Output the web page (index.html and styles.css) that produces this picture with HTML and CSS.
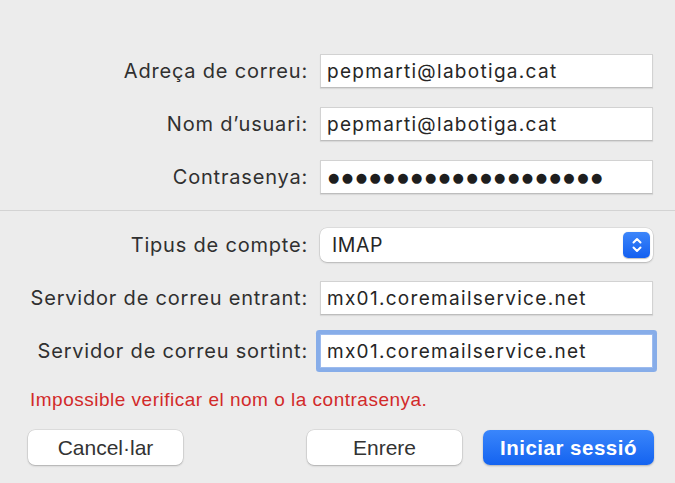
FILE: index.html
```html
<!DOCTYPE html>
<html lang="ca">
<head>
<meta charset="utf-8">
<title>Afegir compte</title>
<link rel="stylesheet" href="styles.css">
</head>
<body>
<main class="sheet">
  <section class="form form-top">
    <label class="lbl">Adreça de correu:</label>
    <div class="field">pepmarti@labotiga.cat</div>
    <label class="lbl">Nom d’usuari:</label>
    <div class="field">pepmarti@labotiga.cat</div>
    <label class="lbl">Contrasenya:</label>
    <div class="field field-pass"><span class="dots">●●●●●●●●●●●●●●●●●●●●</span></div>
  </section>
  <hr class="divider">
  <section class="form form-bottom">
    <label class="lbl">Tipus de compte:</label>
    <div class="select">
      <span>IMAP</span>
      <span class="stepper">
        <svg width="12" height="18" viewBox="0 0 12 18" fill="none" stroke="#fff" stroke-width="2" stroke-linecap="round" stroke-linejoin="round"><path d="M2.5 6.5 L6 3 L9.5 6.5"/><path d="M2.5 11.5 L6 15 L9.5 11.5"/></svg>
      </span>
    </div>
    <label class="lbl">Servidor de correu entrant:</label>
    <div class="field">mx01.coremailservice.net</div>
    <label class="lbl">Servidor de correu sortint:</label>
    <div class="field field-focus">mx01.coremailservice.net</div>
  </section>
  <p class="error">Impossible verificar el nom o la contrasenya.</p>
  <div class="actions">
    <button class="btn">Cancel·lar</button>
    <span class="spacer"></span>
    <button class="btn">Enrere</button>
    <button class="btn btn-primary">Iniciar sessió</button>
  </div>
</main>
</body>
</html>
```

FILE: styles.css
```css
html, body {
  margin: 0;
  padding: 0;
  background: #ececec;
}

.sheet {
  width: 675px;
  height: 483px;
  overflow: hidden;
  display: flex;
  flex-direction: column;
  font-family: Inter, "Liberation Sans", sans-serif;
  color: #2b2b2b;
}

.form {
  display: grid;
  grid-template-columns: 308px 333px;
  column-gap: 12px;
  row-gap: 19px;
  align-items: center;
}

.form-top {
  padding-top: 54px;
}

.lbl {
  text-align: right;
  font-size: 20px;
  letter-spacing: 0.8px;
  color: #303030;
  white-space: nowrap;
}

.field {
  height: 34px;
  box-sizing: border-box;
  background: #fff;
  border: 1px solid #d2d2d2;
  border-bottom-color: #bdbdbd;
  box-shadow: 0 1px 1px rgba(0, 0, 0, 0.08);
  padding: 0 6px;
  display: flex;
  align-items: center;
  font-size: 19px;
  letter-spacing: 1.3px;
  color: #262626;
  white-space: nowrap;
}

.field-pass {
  padding-left: 7px;
}

.dots {
  font-family: "DejaVu Sans", sans-serif;
  font-size: 13px;
  letter-spacing: 2.5px;
  color: #1e1e1e;
}

.field-focus {
  box-shadow: 0 0 0 4px rgba(110, 158, 232, 0.8);
  border-color: #9dbbee;
  border-radius: 1px;
}

.divider {
  margin: 16px 0 17px;
  border: 0;
  height: 1px;
  background: #d3d3d3;
}

.select {
  height: 34px;
  box-sizing: border-box;
  background: #fff;
  border-radius: 7px;
  box-shadow: 0 0 0 0.5px rgba(0, 0, 0, 0.12), 0 1px 2px rgba(0, 0, 0, 0.18);
  display: flex;
  align-items: center;
  justify-content: space-between;
  padding: 0 3px 0 12px;
  font-size: 19.5px;
  letter-spacing: 0.6px;
  color: #262626;
}

.stepper {
  width: 27px;
  height: 26px;
  border-radius: 5px;
  background: linear-gradient(#3d86fa, #135ff0);
  display: flex;
  align-items: center;
  justify-content: center;
  box-shadow: 0 0.5px 1px rgba(0, 0, 0, 0.25);
}

.error {
  margin: 22px 0 0 30px;
  font-family: "Liberation Sans", Arial, sans-serif;
  font-size: 19px;
  letter-spacing: 0.5px;
  color: #d22a2a;
  line-height: 20px;
}

.actions {
  display: flex;
  align-items: center;
  gap: 21px;
  padding: 0 21px 0 28px;
  margin-top: 20px;
}

.spacer {
  flex: 1;
}

.btn {
  height: 35px;
  width: 155px;
  border: 0;
  border-radius: 7px;
  background: #fff;
  box-shadow: 0 0 0 0.5px rgba(0, 0, 0, 0.12), 0 1px 2px rgba(0, 0, 0, 0.22);
  font-family: "Liberation Sans", Arial, sans-serif;
  font-size: 21px;
  color: #333;
  padding: 0;
}

.btn-primary {
  width: 171px;
  background: linear-gradient(#3a86fb, #1463f0);
  color: #fff;
  font-weight: 600;
  font-size: 20.5px;
  letter-spacing: 0.5px;
  box-shadow: 0 1px 2px rgba(0, 0, 0, 0.25);
}
```
